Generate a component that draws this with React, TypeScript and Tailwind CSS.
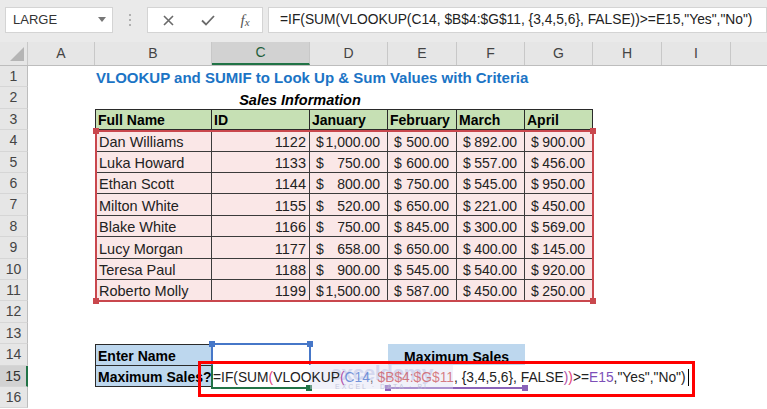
import React from 'react';

const ROWH = [
  'h-[21px]', 'h-[22px]', 'h-[21px]', 'h-[22px]', 'h-[21px]', 'h-[21px]', 'h-[22px]', 'h-[21px]',
  'h-[22px]', 'h-[21px]', 'h-[21px]', 'h-[22px]', 'h-[21px]', 'h-[22px]', 'h-[21px]', 'h-[21px]',
];

const COLS: { l: string; w: string }[] = [
  { l: 'A', w: 'w-[67px]' },
  { l: 'B', w: 'w-[117px]' },
  { l: 'C', w: 'w-[98px]' },
  { l: 'D', w: 'w-[78px]' },
  { l: 'E', w: 'w-[69px]' },
  { l: 'F', w: 'w-[68px]' },
  { l: 'G', w: 'w-[68px]' },
  { l: 'H', w: 'w-[69px]' },
  { l: 'I', w: 'w-[69px]' },
  { l: 'J', w: 'w-[80px]' },
];

const DATA: [string, string, string, string, string, string][] = [
  ['Dan Williams', '1122', '1,000.00', '500.00', '892.00', '900.00'],
  ['Luka Howard', '1133', '750.00', '600.00', '557.00', '456.00'],
  ['Ethan Scott', '1144', '800.00', '750.00', '545.00', '950.00'],
  ['Milton White', '1155', '520.00', '650.00', '221.00', '450.00'],
  ['Blake White', '1166', '750.00', '845.00', '300.00', '569.00'],
  ['Lucy Morgan', '1177', '658.00', '650.00', '400.00', '145.00'],
  ['Teresa Paul', '1188', '900.00', '545.00', '540.00', '920.00'],
  ['Roberto Molly', '1199', '1,500.00', '587.00', '450.00', '250.00'],
];

function Row({ n, active, children }: { n: number; active?: boolean; children?: React.ReactNode }) {
  return (
    <div className={`flex ${ROWH[n - 1]}`}>
      <div
        className={`w-[28px] shrink-0 flex items-center justify-center border-b border-b-[#d6d6d6] text-[14px] ${
          active
            ? 'bg-[#d2d2d2] border-r-2 border-r-[#217346] text-[#333]'
            : 'bg-[#e6e6e6] border-r border-r-[#bdbdbd] text-[#444]'
        }`}
      >
        {n}
      </div>
      {children}
    </div>
  );
}

const Blank = ({ w }: { w: string }) => <div className={`${w} shrink-0`} />;

function Money({ w, v }: { w: string; v: string }) {
  return (
    <div className={`${w} shrink-0 bg-[#fae7e7] border-r border-b border-[#3b3b3b] flex items-end justify-between pl-[6px] pr-[7px] pb-[1px] leading-[16px] text-[14px] text-[#222]`}>
      <span>$</span>
      <span>{v}</span>
    </div>
  );
}

function Handle({ className }: { className: string }) {
  return <div className={`absolute w-[6px] h-[6px] ${className}`} />;
}

export default function App() {
  return (
    <div className="relative w-[767px] h-[409px] overflow-hidden bg-white font-['Liberation_Sans',Arial,sans-serif] text-[14.5px] text-black">
      {/* Formula bar */}
      <div className="h-[42px] bg-[#eaeaea] flex items-start pt-[7px] pl-[5px]">
        <div className="w-[108px] h-[26px] bg-white border border-[#d4d4d4] flex items-center justify-between pl-[7px] pr-[6px]">
          <span className="text-[13px] text-[#333]">LARGE</span>
          <svg width="8" height="5" viewBox="0 0 8 5" className="mb-[1px]">
            <path d="M0 0 L8 0 L4 5 Z" fill="#777" />
          </svg>
        </div>
        <div className="w-[34px] h-[26px] flex flex-col items-center justify-center gap-[3px]">
          <div className="w-[2px] h-[2px] bg-[#b0b0b0]" />
          <div className="w-[2px] h-[2px] bg-[#b0b0b0]" />
          <div className="w-[2px] h-[2px] bg-[#b0b0b0]" />
        </div>
        <div className="w-[116px] h-[26px] bg-white border border-[#d4d4d4] flex items-center">
          <div className="w-[40px] flex justify-center">
            <svg width="11" height="11" viewBox="0 0 11 11">
              <path d="M1 1 L10 10 M10 1 L1 10" stroke="#6a6a6a" strokeWidth="1.6" />
            </svg>
          </div>
          <div className="w-[40px] flex justify-center">
            <svg width="14" height="11" viewBox="0 0 14 11">
              <path d="M1 5.5 L5 9.5 L13 1" stroke="#6a6a6a" strokeWidth="1.8" fill="none" />
            </svg>
          </div>
          <div className="w-[34px] flex justify-center items-end font-['Liberation_Serif',serif] italic text-[#555]">
            <span className="text-[15px] leading-none">f</span>
            <span className="text-[11px] leading-none">x</span>
          </div>
        </div>
        <div className="ml-[5px] flex-1 h-[26px] bg-white border border-[#d4d4d4] flex items-center pl-[11px] text-[13.8px] text-[#222] whitespace-nowrap overflow-hidden">
          =IF(SUM(VLOOKUP(C14, $B$4:$G$11, {'{'}3,4,5,6{'}'}, FALSE))&gt;=E15,"Yes","No")
        </div>
      </div>

      {/* Column headers */}
      <div className="flex h-[24px] bg-[#e6e6e6] border-b border-b-[#bdbdbd]">
        <div className="w-[28px] shrink-0 border-r border-r-[#c8c8c8] relative">
          <svg width="14" height="14" viewBox="0 0 14 14" className="absolute left-[10px] top-[5px]">
            <path d="M14 0 L14 14 L0 14 Z" fill="#b5b5b5" />
          </svg>
        </div>
        {COLS.map((c) => (
          <div
            key={c.l}
            className={`${c.w} shrink-0 flex items-center justify-center text-[14px] border-r border-r-[#c8c8c8] ${
              c.l === 'C' ? 'bg-[#d2d2d2] text-[#1f5f3c] border-b-2 border-b-[#217346]' : 'text-[#444]'
            }`}
          >
            {c.l}
          </div>
        ))}
      </div>

      {/* Sheet */}
      <div className="flex flex-col">
        <Row n={1}>
          <Blank w="w-[67px]" />
          <div className="w-[117px] shrink-0 flex items-end pl-[1px] pb-[1px] leading-[16px] whitespace-nowrap font-bold text-[#1b74c5] text-[15px]">
            VLOOKUP and SUMIF to Look Up &amp; Sum Values with Criteria
          </div>
        </Row>
        <Row n={2}>
          <Blank w="w-[67px]" />
          <Blank w="w-[117px]" />
          <div className="w-[176px] shrink-0 flex items-end justify-center pb-[1px] leading-[16px] font-bold italic">
            Sales Information
          </div>
        </Row>
        <Row n={3}>
          <Blank w="w-[67px]" />
          {[
            ['w-[117px]', 'Full Name'],
            ['w-[98px]', 'ID'],
            ['w-[78px]', 'January'],
            ['w-[69px]', 'February'],
            ['w-[68px]', 'March'],
            ['w-[68px]', 'April'],
          ].map(([w, t], i) => (
            <div
              key={t}
              className={`${w} shrink-0 bg-[#c6e0b4] border-t border-r border-b border-[#2a2a2a] ${
                i === 0 ? 'border-l' : ''
              } flex items-end pl-[2px] pb-[1px] leading-[16px] font-bold text-[14px] whitespace-nowrap`}
            >
              {t}
            </div>
          ))}
        </Row>
        {DATA.map((d, i) => (
          <Row key={d[0]} n={i + 4}>
            <Blank w="w-[67px]" />
            <div className="w-[117px] shrink-0 bg-[#fae7e7] border-l border-r border-b border-[#3b3b3b] flex items-end pl-[3px] pb-[1px] leading-[16px] text-[#222]">
              {d[0]}
            </div>
            <div className="w-[98px] shrink-0 bg-[#fae7e7] border-r border-b border-[#3b3b3b] flex items-end justify-end pr-[3px] pb-[1px] leading-[16px] text-[#222]">
              {d[1]}
            </div>
            <Money w="w-[78px]" v={d[2]} />
            <Money w="w-[69px]" v={d[3]} />
            <Money w="w-[68px]" v={d[4]} />
            <Money w="w-[68px]" v={d[5]} />
          </Row>
        ))}
        <Row n={12} />
        <Row n={13} />
        <Row n={14}>
          <Blank w="w-[67px]" />
          <div className="w-[117px] shrink-0 bg-[#bdd7ee] border border-[#2a2a2a] flex items-end pl-[2px] pb-[1px] leading-[16px] font-bold text-[14px]">
            Enter Name
          </div>
          <Blank w="w-[98px]" />
          <Blank w="w-[78px]" />
          <div className="w-[137px] shrink-0 bg-[#bdd7ee] flex items-end justify-center pb-[1px] leading-[16px] font-bold text-[14px]">
            Maximum Sales
          </div>
        </Row>
        <Row n={15} active>
          <Blank w="w-[67px]" />
          <div className="w-[117px] shrink-0 bg-[#bdd7ee] border-l border-r border-b border-[#2a2a2a] flex items-end pl-[2px] pb-[1px] leading-[16px] font-bold text-[14px] whitespace-nowrap overflow-hidden">
            Maximum Sales?
          </div>
        </Row>
        <Row n={16} />
      </div>

      {/* Range highlight B4:G11 */}
      <div className="absolute left-[95px] top-[130px] w-[499px] h-[172px] border-2 border-[#c9474d]">
        <Handle className="-left-[4px] -top-[4px] bg-[#c9474d]" />
        <Handle className="-right-[4px] -top-[4px] bg-[#c9474d]" />
        <Handle className="-left-[4px] -bottom-[4px] bg-[#c9474d]" />
        <Handle className="-right-[4px] -bottom-[4px] bg-[#c9474d]" />
      </div>

      {/* C14 blue highlight */}
      <div className="absolute left-[211px] top-[343px] w-[100px] h-[24px] border-2 border-[#4677c8]">
        <Handle className="-left-[4px] -top-[4px] bg-[#4677c8]" />
        <Handle className="-right-[4px] -top-[4px] bg-[#4677c8]" />
      </div>

      {/* in-cell edit area */}
      <div className="absolute left-[212px] top-[365px] w-[482px] h-[23px] bg-white" />
      {/* C15 green active cell */}
      <div className="absolute left-[211px] top-[365px] w-[2px] h-[24px] bg-[#217346]" />
      <div className="absolute left-[211px] top-[387px] w-[98px] h-[2px] bg-[#217346]" />
      <div className="absolute left-[306px] top-[385px] w-[6px] h-[6px] bg-[#217346]" />
      {/* E15 purple */}
      <div className="absolute left-[388px] top-[387px] w-[138px] h-[2px] bg-[#8a62b8]" />
      <div className="absolute left-[385px] top-[385px] w-[6px] h-[6px] bg-[#8a62b8]" />
      <div className="absolute left-[522px] top-[385px] w-[6px] h-[6px] bg-[#8a62b8]" />

      {/* watermark */}
      <div className="absolute left-[310px] top-[362px] w-[143px] h-[27px] bg-[#dcdcf2]/40 flex flex-col items-center justify-start overflow-hidden">
        <span className="text-[21px] leading-[22px] font-bold text-[#c7cdea]/70 tracking-tight">exceldemy</span>
        <span className="text-[7px] leading-[6px] tracking-[2px] text-[#b8bcd6]/80">EXCEL · DATA · BI</span>
      </div>

      {/* edit text */}
      <div className="absolute left-[213px] top-[366px] h-[21px] flex items-end pb-[1px] leading-[16px] text-[13.8px] whitespace-nowrap text-[#222]">
        <span>=IF(SUM</span>
        <span className="text-[#e0417a]">(</span>
        <span>VLOOKUP</span>
        <span className="text-[#b04fa8]">(</span>
        <span className="text-[#3d6ccc]/70">C14</span>
        <span className="text-[#222]/60">,&nbsp;</span>
        <span className="text-[#c9474d]/70">$B$4:$G$11</span>
        <span>, {'{'}3,4,5,6{'}'}, FALSE</span>
        <span className="text-[#b04fa8]">)</span>
        <span className="text-[#e0417a]">)</span>
        <span>&gt;=</span>
        <span className="text-[#7d4fb8]">E15</span>
        <span>,"Yes","No")</span>
        <span className="ml-[2px] w-[1px] h-[17px] bg-black" />
      </div>

      {/* red annotation box */}
      <div className="absolute left-[198px] top-[361px] w-[497px] h-[36px] border-[3px] border-[#ff0000]" />
    </div>
  );
}
